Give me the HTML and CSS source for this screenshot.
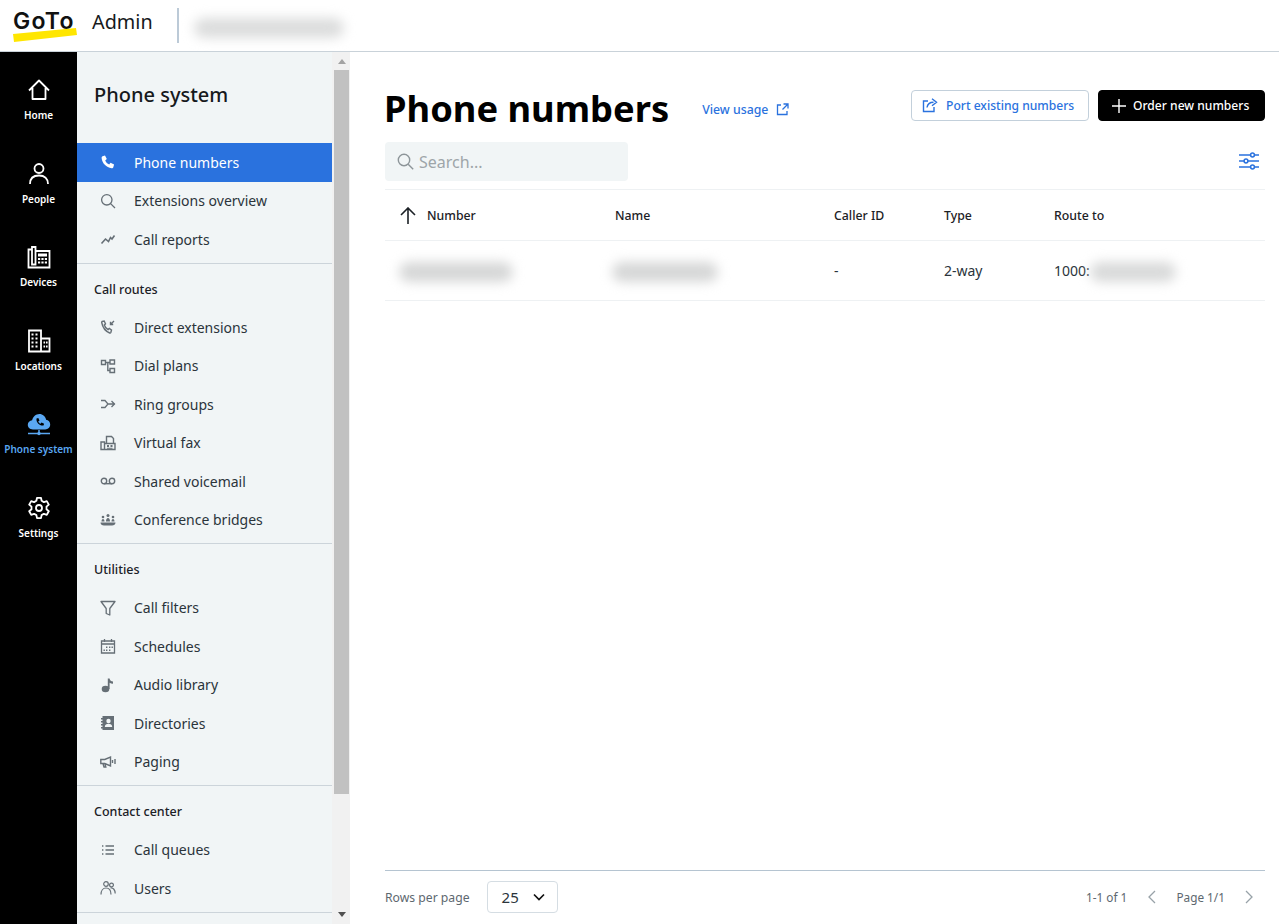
FILE: index.html
```html
<!DOCTYPE html>
<html lang="en">
<head>
<meta charset="utf-8">
<title>Phone numbers</title>
<link rel="stylesheet" href="styles.css">
</head>
<body>
<header class="topbar">
  <div class="logo">
    <span class="logo-text">GoTo</span>
    <svg class="logo-swoosh" width="66" height="16" viewBox="0 0 66 16"><path d="M1 7 L64 1 L65 8 L2 15 Z" fill="#ffe600"/></svg>
  </div>
  <span class="app-name">Admin</span>
  <span class="top-divider"></span>
  <span class="blur blur-account"></span>
</header>
<div class="shell">
  <nav class="rail">
    <a class="rail-item">
      <svg width="24" height="24" viewBox="0 0 24 24" fill="none" stroke="currentColor" stroke-width="1.800" stroke-linejoin="round"><path d="M2 12.500 12 2.500l10 10M5.500 10v11h13V10"/></svg>
      <span>Home</span>
    </a>
    <a class="rail-item">
      <svg width="24" height="24" viewBox="0 0 24 24" fill="none" stroke="currentColor" stroke-width="1.800"><circle cx="12" cy="6.500" r="4.500"/><path d="M3 22c0-5.500 3.500-8.500 9-8.500s9 3 9 8.500"/></svg>
      <span>People</span>
    </a>
    <a class="rail-item">
      <svg width="24" height="24" viewBox="0 0 24 24" fill="none" stroke="currentColor" stroke-width="1.800"><path d="M5 4.500H1.500V22.500H22.500V6H8.500"/><path d="M5 2h3.500v17.500H5z"/><path d="M11 8.500h9v3h-9z" fill="currentColor" stroke="none"/><path d="M11 13h2.200v2H11zM14.400 13h2.200v2h-2.200zM17.800 13H20v2h-2.200zM11 16.500h2.200v2H11zM14.400 16.500h2.200v2h-2.200zM17.800 16.500H20v2h-2.200z" fill="currentColor" stroke="none"/></svg>
      <span>Devices</span>
    </a>
    <a class="rail-item">
      <svg width="24" height="24" viewBox="0 0 24 24" fill="none" stroke="currentColor" stroke-width="1.800"><path d="M2 22.500V1.500h12v21zM14 9.500h8.500v13H14"/><path d="M4.500 4.500h2v2h-2zM8.500 4.500h2v2h-2zM4.500 8.500h2v2h-2zM8.500 8.500h2v2h-2zM4.500 12.500h2v2h-2zM8.500 12.500h2v2h-2zM4.500 16.500h2v2h-2zM8.500 16.500h2v2h-2zM16.500 12.500h1.600v2h-1.600zM19 12.500h1.600v2H19zM16.500 16.500h1.600v2h-1.600zM19 16.500h1.600v2H19z" fill="currentColor" stroke="none"/></svg>
      <span>Locations</span>
    </a>
    <a class="rail-item rail-active">
      <svg width="24" height="24" viewBox="0 0 24 24"><path d="M6 17.500C2.800 17.500.8 15.400.8 12.800c0-2.500 1.900-4.400 4.300-4.600C6 4.800 8.800 2 12.300 2c3.500 0 6.300 2.500 6.800 5.800 2.400.3 4.100 2.300 4.100 4.800 0 2.700-2.100 4.900-5 4.900z" fill="currentColor"/><path d="M9.500 6.500l1.800-.6 1.200 2.600-1.300 1c.5 1.100 1.200 1.800 2.300 2.300l1-1.300 2.600 1.200-.6 1.800c-3.900.6-7.600-3.100-7-7z" fill="#000"/><path d="M1 21.500h22M12 18v3.500" stroke="currentColor" stroke-width="1.500"/><circle cx="12" cy="21.500" r="1.700" fill="currentColor"/></svg>
      <span>Phone system</span>
    </a>
    <a class="rail-item">
      <svg width="24" height="24" viewBox="0 0 24 24" fill="none" stroke="currentColor" stroke-width="1.800" stroke-linejoin="round"><path d="M10 1.800h4l.6 3 2.300 1.300 2.900-1 2 3.500-2.300 2 0 2.700 2.300 2-2 3.500-2.900-1-2.300 1.300-.6 3h-4l-.6-3-2.300-1.300-2.900 1-2-3.500 2.300-2 0-2.700-2.300-2 2-3.500 2.900 1 2.300-1.300z"/><circle cx="12" cy="12" r="3"/></svg>
      <span>Settings</span>
    </a>
  </nav>

  <aside class="sidebar">
    <div class="side-content">
      <h2 class="side-title">Phone system</h2>
      <ul class="side-list">
        <li class="side-item side-active">
          <svg class="ic" viewBox="0 0 16 16"><path d="M2.500 2.300 5 1.500l1.800 3.600-1.600 1.300c.8 1.800 2.100 3.200 4 4.100l1.300-1.700 3.600 1.800-.8 2.600c-.2.700-.9 1.100-1.700 1C6.300 13.600 2.200 9.300 1.600 4 1.500 3.200 1.800 2.600 2.500 2.300z" fill="currentColor"/></svg>
          <span>Phone numbers</span>
        </li>
        <li class="side-item">
          <svg class="ic" viewBox="0 0 16 16" fill="none" stroke="currentColor" stroke-width="1.300"><circle cx="6.800" cy="6.800" r="5.200"/><path d="m10.600 10.600 4.400 4.400"/></svg>
          <span>Extensions overview</span>
        </li>
        <li class="side-item">
          <svg class="ic" viewBox="0 0 16 16" fill="none" stroke="currentColor" stroke-width="1.600"><path d="M1.500 12.500 5.500 8l3 2.500 2-4 1.500 1.500 2.500-3.500"/></svg>
          <span>Call reports</span>
        </li>
      </ul>
      <div class="side-group">
        <h3 class="side-label">Call routes</h3>
        <ul class="side-list">
          <li class="side-item">
            <svg class="ic" viewBox="0 0 16 16" fill="none" stroke="currentColor" stroke-width="1.400"><path d="M2 2.500 4.200 2l1.300 2.800L4.300 6c.6 1.800 1.900 3.600 3.800 4.600l1.200-1.100 2.200 1.500-.6 2.300c-.2.600-.6.800-1.200.7C5.700 12.300 2.600 8.300 1.700 3.500c-.1-.5 0-.8.300-1z"/><path d="M14 2 10.500 5.500M10.500 2.800v2.700h2.700"/></svg>
            <span>Direct extensions</span>
          </li>
          <li class="side-item">
            <svg class="ic" viewBox="0 0 16 16" fill="none" stroke="currentColor" stroke-width="1.400"><path d="M1.500 2.500h4v4h-4zM10 2h4.500v4H10zM10 10.500h4.500v4H10zM5.500 4.500H10M7.800 4.500v8H10"/></svg>
            <span>Dial plans</span>
          </li>
          <li class="side-item">
            <svg class="ic" viewBox="0 0 16 16" fill="none" stroke="currentColor" stroke-width="1.300"><path d="M1 4.500h4l3 3.500-3 3.500H1M8 8h7M11.500 5l3 3-3 3"/></svg>
            <span>Ring groups</span>
          </li>
          <li class="side-item">
            <svg class="ic" viewBox="0 0 16 16" fill="none" stroke="currentColor" stroke-width="1.400"><path d="M1 14.500V7h3.500v7.500zM4.500 8.500h10.500v6H4.500zM6.500 8.500V1.500h5l2 2v5"/><path d="M7 10h2v2H7zM10.500 10h2v2h-2zM7 12.800h5.500v1H7z" fill="currentColor" stroke="none"/></svg>
            <span>Virtual fax</span>
          </li>
          <li class="side-item">
            <svg class="ic" viewBox="0 0 16 16" fill="none" stroke="currentColor" stroke-width="1.400"><circle cx="4" cy="8" r="2.700"/><circle cx="12" cy="8" r="2.700"/><path d="M4 10.700h8"/></svg>
            <span>Shared voicemail</span>
          </li>
          <li class="side-item">
            <svg class="ic" viewBox="0 0 16 16"><path d="M.5 10.500h15c0 2-1.500 3-3.500 3H4c-2 0-3.500-1-3.500-3z" fill="currentColor"/><circle cx="8" cy="3.500" r="1.500" fill="currentColor"/><circle cx="3" cy="5" r="1.300" fill="currentColor"/><circle cx="13" cy="5" r="1.300" fill="currentColor"/><path d="M6 9.500c0-2 .8-3.500 2-3.500s2 1.500 2 3.500zM1.500 9.500c0-1.500.6-2.500 1.500-2.500s1.500 1 1.500 2.500zM11.500 9.500c0-1.500.6-2.500 1.500-2.500s1.500 1 1.500 2.500z" fill="currentColor"/></svg>
            <span>Conference bridges</span>
          </li>
        </ul>
      </div>
      <div class="side-group">
        <h3 class="side-label">Utilities</h3>
        <ul class="side-list">
          <li class="side-item">
            <svg class="ic" viewBox="0 0 16 16" fill="none" stroke="currentColor" stroke-width="1.300" stroke-linejoin="round"><path d="M1 1.500h14L9.800 8.500v6.500l-3.600-1.500V8.500z"/></svg>
            <span>Call filters</span>
          </li>
          <li class="side-item">
            <svg class="ic" viewBox="0 0 16 16" fill="none" stroke="currentColor" stroke-width="1.300"><path d="M1.500 3h13v12h-13zM1.500 6h13M4.500 1v3M11.500 1v3"/><path d="M6 8.500h1.400V10H6zM9 8.500h1.400V10H9zM11.500 8.500h1.400V10h-1.400zM6 11.500h1.400V13H6zM9 11.500h1.400V13H9zM3.500 11.500h1.400V13H3.500z" fill="currentColor" stroke="none"/></svg>
            <span>Schedules</span>
          </li>
          <li class="side-item">
            <svg class="ic" viewBox="0 0 16 16"><ellipse cx="5.500" cy="12" rx="3.800" ry="3.300" fill="currentColor"/><path d="M7.800 12V1.500h1.800c.3 2.200 1.600 2.800 3.400 3v2.300c-1.400 0-2.500-.4-3.400-1.100V12z" fill="currentColor"/></svg>
            <span>Audio library</span>
          </li>
          <li class="side-item">
            <svg class="ic" viewBox="0 0 16 16"><path d="M2.500 1h11.500v14H2.500zM1 3h3v1.500H1zM1 6h3v1.500H1zM1 9h3v1.500H1zM1 12h3v1.500H1z" fill="currentColor"/><circle cx="8.500" cy="6" r="2.200" fill="#f1f5f6"/><path d="M4.800 12c0-2.200 1.600-3.300 3.700-3.300s3.700 1.100 3.700 3.300z" fill="#f1f5f6"/></svg>
            <span>Directories</span>
          </li>
          <li class="side-item">
            <svg class="ic" viewBox="0 0 16 16" fill="none" stroke="currentColor" stroke-width="1.400"><path d="M.8 5.500h4L10.500 3v9L4.800 9.500H.8zM3 9.500l1 3.500h1.800l-.8-3.200"/><path d="M12.500 6v3M15 5v5"/></svg>
            <span>Paging</span>
          </li>
        </ul>
      </div>
      <div class="side-group">
        <h3 class="side-label">Contact center</h3>
        <ul class="side-list">
          <li class="side-item">
            <svg class="ic" viewBox="0 0 16 16" fill="none" stroke="currentColor" stroke-width="1.400"><path d="M5.500 4h8.500M5.500 8h8.500M5.500 12h8.500M2 4h1.400M2 8h1.400M2 12h1.400"/></svg>
            <span>Call queues</span>
          </li>
          <li class="side-item">
            <svg class="ic" viewBox="0 0 16 16" fill="none" stroke="currentColor" stroke-width="1.200"><circle cx="6" cy="4" r="2.300"/><circle cx="11.500" cy="5" r="1.900"/><path d="M1 14.500c0-4 2-6.500 5-6.500s5 2.500 5 6.500M10.500 8c2.800-.5 4.700 2 4.700 5.500"/></svg>
            <span>Users</span>
          </li>
        </ul>
      </div>
      <div class="side-end"></div>
    </div>
    <div class="scrollbar">
      <span class="scroll-up"></span>
      <span class="scroll-thumb"></span>
      <span class="scroll-track"></span>
      <span class="scroll-down"></span>
    </div>
  </aside>

  <main class="main">
    <div class="title-row">
      <div class="title-left">
        <h1 class="page-title">Phone numbers</h1>
        <a class="usage-link">View usage
          <svg width="13" height="13" viewBox="0 0 13 13" fill="none" stroke="currentColor" stroke-width="1.300"><path d="M5 2H1.500v9.500H11V8M7.500 1h4.500v4.500M12 1 6.500 6.500"/></svg>
        </a>
      </div>
      <div class="actions">
        <button class="btn btn-outline">
          <svg width="16" height="15" viewBox="0 0 16 15" fill="none" stroke="currentColor" stroke-width="1.400"><path d="M6 3H1.500v10.500H12V9M5 9.500C5.500 6 8 4.200 11.500 4.200M10 .8l4.500 3.500L10 7.800"/></svg>
          Port existing numbers
        </button>
        <button class="btn btn-dark">
          <svg width="14" height="14" viewBox="0 0 14 14" fill="none" stroke="currentColor" stroke-width="1.400"><path d="M7 0v14M0 7h14"/></svg>
          Order new numbers
        </button>
      </div>
    </div>
    <div class="search-row">
      <div class="search">
        <svg width="17" height="17" viewBox="0 0 17 17" fill="none" stroke="#8d9599" stroke-width="1.400"><circle cx="7" cy="7" r="5.700"/><path d="m11.200 11.200 5 5"/></svg>
        <span>Search...</span>
      </div>
      <svg class="filter-icon" width="20" height="18" viewBox="0 0 20 18" fill="none" stroke="currentColor" stroke-width="1.500"><path d="M0 3h20M0 9h20M0 15h20"/><circle cx="13.500" cy="3" r="1.900" fill="#fff"/><circle cx="7" cy="9" r="1.900" fill="#fff"/><circle cx="13.500" cy="15" r="1.900" fill="#fff"/></svg>
    </div>
    <div class="table">
      <div class="tr th">
        <div class="td col-number">
          <svg width="16" height="17" viewBox="0 0 16 17" fill="none" stroke="currentColor" stroke-width="1.600"><path d="M8 17V1M1 8l7-7 7 7"/></svg>
          <span>Number</span>
        </div>
        <div class="td col-name">Name</div>
        <div class="td col-caller">Caller ID</div>
        <div class="td col-type">Type</div>
        <div class="td col-route">Route to</div>
      </div>
      <div class="tr tb">
        <div class="td col-number"><span class="blur blur-number"></span></div>
        <div class="td col-name"><span class="blur blur-name"></span></div>
        <div class="td col-caller">-</div>
        <div class="td col-type">2-way</div>
        <div class="td col-route">1000:<span class="blur blur-route"></span></div>
      </div>
    </div>
    <footer class="pager">
      <div class="pager-left">
        <span>Rows per page</span>
        <div class="select">
          <span>25</span>
          <svg width="12" height="8" viewBox="0 0 12 8" fill="none" stroke="#111" stroke-width="1.700"><path d="m1 1.500 5 5 5-5"/></svg>
        </div>
      </div>
      <div class="pager-right">
        <span>1-1 of 1</span>
        <svg class="pg-prev" width="9" height="14" viewBox="0 0 9 14" fill="none" stroke="#98a2a8" stroke-width="1.300"><path d="M8 1 2 7l6 6"/></svg>
        <span>Page 1/1</span>
        <svg class="pg-next" width="9" height="14" viewBox="0 0 9 14" fill="none" stroke="#98a2a8" stroke-width="1.300"><path d="m1 1 6 6-6 6"/></svg>
      </div>
    </footer>
  </main>
</div>
</body>
</html>
```

FILE: styles.css
```css
* { box-sizing: border-box; }
html, body { height: 100%; }
body {
  margin: 0;
  overflow: hidden;
  background: #fff;
  color: #16191c;
  font-family: "Noto Sans", "Open Sans", sans-serif;
  font-size: 14px;
}
ul { list-style: none; margin: 0; padding: 0; }
h1, h2, h3 { margin: 0; }

.topbar {
  height: 52px;
  display: flex;
  align-items: center;
  background: #fff;
  border-bottom: 1px solid #c9d2d9;
}
.logo { position: relative; width: 66px; height: 36px; margin-left: 12px; }
.logo-text {
  display: block;
  font-family: "Inter", sans-serif;
  font-weight: 600;
  font-size: 23px;
  line-height: 36px;
  letter-spacing: 1.200px;
  color: #111;
  margin: -5px 0 0 1px;
}
.logo-swoosh { position: absolute; left: 0; top: 19px; }
.app-name { margin: 0 0 8px 14px; font-size: 19.800px; line-height: 28px; color: #16191c; }
.top-divider { width: 2px; height: 35px; margin-left: 24px; background: #bccad7; }
.blur { display: inline-block; background: #dcdddd; border-radius: 12px; filter: blur(6px); }
.blur-account { width: 150px; height: 20px; margin-left: 15px; margin-top: 4px; }

.shell { display: flex; height: 872px; }

.rail {
  width: 77px;
  flex: none;
  background: #000;
  color: #fff;
  display: flex;
  flex-direction: column;
  padding-top: 26px;
  gap: 19.600px;
}
.rail-item {
  height: 64px;
  display: flex;
  flex-direction: column;
  align-items: center;
  justify-content: flex-start;
  gap: 6px;
  font-size: 10px;
  font-weight: 600;
  line-height: 14px;
  white-space: nowrap;
}
.rail-item svg { flex: none; }
.rail-active { color: #5aa7f2; }

.sidebar { width: 273px; flex: none; display: flex; background: #f1f5f6; overflow: hidden; }
.side-content { width: 255px; flex: none; }
.side-title {
  height: 91px;
  padding: 27px 0 0 17px;
  font-size: 20px;
  font-weight: 500;
  line-height: 32px;
  color: #16191c;
}
.side-item {
  height: 38.500px;
  display: flex;
  align-items: center;
  padding-left: 23px;
  gap: 18px;
  font-size: 14px;
  color: #2b343b;
}
.ic { width: 16px; height: 16px; flex: none; color: #666f76; }
.side-active { background: #2a72de; color: #fff; }
.side-active .ic { color: #fff; }
.side-group { border-top: 1px solid #ccd4da; margin-top: 4px; }
.side-label {
  height: 44.500px;
  padding: 17px 0 0 17px;
  font-size: 12.500px;
  font-weight: 500;
  line-height: 17px;
  color: #1c2126;
}
.side-end { border-top: 1px solid #ccd4da; margin-top: 4px; }

.scrollbar { width: 18px; flex: none; display: flex; flex-direction: column; align-items: center; background: #f1f1f1; padding: 0 1px 0 2px; }
.scroll-up { width: 0; height: 0; margin: 7px 0 6px; border: 4px solid transparent; border-top: 0; border-bottom: 5px solid #a3a3a3; }
.scroll-thumb { width: 100%; height: 724px; flex: none; background: #c1c1c1; }
.scroll-track { flex: 1; }
.scroll-down { width: 0; height: 0; margin: 0 0 7px; border: 4px solid transparent; border-bottom: 0; border-top: 5px solid #505050; }

.main { flex: 1; min-width: 0; display: flex; flex-direction: column; padding: 0 14px 0 35px; }
.title-row { height: 90px; display: flex; justify-content: space-between; padding-top: 38px; }
.title-left { display: flex; align-items: center; height: 37px; }
.page-title { font-size: 36.300px; font-weight: 700; line-height: 37px; color: #000; margin-left: -1px; }
.usage-link {
  margin: 2px 0 0 33px;
  display: flex;
  align-items: center;
  gap: 8px;
  font-size: 12.300px;
  font-weight: 500;
  color: #2a72de;
}
.actions { display: flex; gap: 9px; }
.btn {
  height: 31px;
  display: flex;
  align-items: center;
  gap: 8px;
  font-family: inherit;
  font-size: 12.100px;
  font-weight: 500;
  border-radius: 4px;
}
.btn-outline { width: 178px; padding: 0 0 0 10px; background: #fff; color: #2a72de; border: 1px solid #c3d0db; }
.btn-dark { width: 167px; padding: 0 0 0 13px; background: #000; color: #fff; border: 1px solid #000; gap: 7px; }

.search-row { height: 47px; display: flex; justify-content: space-between; align-items: flex-start; }
.search {
  width: 243px;
  height: 39px;
  display: flex;
  align-items: center;
  gap: 5px;
  padding-left: 12px;
  background: #f1f5f6;
  border-radius: 4px;
  color: #9ea5a9;
  font-size: 16px;
}
.filter-icon { color: #2a72de; margin: 10px 6px 0 0; }

.table { border-top: 1px solid #eef1f3; }
.tr { display: flex; align-items: center; border-bottom: 1px solid #eef1f3; }
.th { height: 51px; font-size: 12.300px; font-weight: 500; color: #1c2126; }
.tb { height: 60px; font-size: 14px; color: #2b343b; }
.td { display: flex; align-items: center; flex: none; }
.col-number { width: 230px; padding-left: 15px; gap: 11px; }
.col-name { width: 219px; }
.col-caller { width: 110px; }
.col-type { width: 110px; }
.col-route { flex: 1; }
.blur-number { width: 114px; height: 20px; margin: 3px 0 0 -1px; background: #d6d7d7; }
.blur-name { width: 106px; height: 20px; margin: 3px 0 0 -3px; background: #d6d7d7; }
.blur-route { width: 86px; height: 20px; margin: 3px 0 0 0; background: #d9dada; }

.pager {
  margin-top: auto;
  height: 54px;
  display: flex;
  justify-content: space-between;
  align-items: center;
  padding-bottom: 1px;
  border-top: 1px solid #b5c4d1;
  color: #5d686f;
  font-size: 12.200px;
}
.pager-left { display: flex; align-items: center; gap: 17px; }
.select {
  width: 71px;
  height: 32px;
  display: flex;
  align-items: center;
  gap: 14px;
  padding-left: 14px;
  border: 1px solid #d5dde3;
  border-radius: 4px;
  color: #2b343b;
  font-size: 15px;
}
.pager-right { display: flex; align-items: center; font-size: 11.800px; }
.pg-prev { margin: 0 20px; }
.pg-next { margin: 0 11px 0 20px; }
```
